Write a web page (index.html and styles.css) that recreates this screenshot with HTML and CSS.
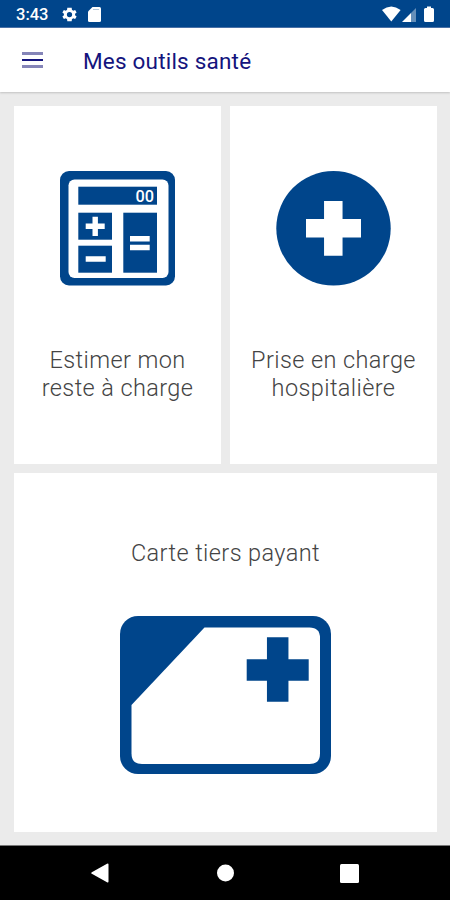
FILE: index.html
```html
<!DOCTYPE html>
<html lang="fr">
<head>
    <meta charset="UTF-8">
    <meta name="viewport" content="width=device-width, initial-scale=1.0">
    <title>Mes outils santé</title>
    <link rel="stylesheet" href="styles.css">
</head>
<body>
    <div class="status-bar">
        <span class="time">3:43</span>
        <svg class="gear" width="15" height="15" viewBox="2 2 20 20">
            <path fill="#fff" fill-rule="evenodd" d="M19.4 13a7.500 7.500 0 0 0 0-2l2.100-1.600-2-3.500-2.500 1a7.700 7.700 0 0 0-1.700-1L14.900 3H9.100l-.4 2.900a7.700 7.700 0 0 0-1.700 1l-2.500-1-2 3.500L4.600 11a7.500 7.500 0 0 0 0 2l-2.100 1.600 2 3.500 2.500-1c.5.4 1.100.7 1.700 1l.4 2.900h5.800l.4-2.900c.6-.3 1.200-.6 1.700-1l2.500 1 2-3.500zM12 15.500a3.500 3.500 0 1 1 0-7 3.500 3.500 0 0 1 0 7z"/>
        </svg>
        <svg class="sd" width="13" height="15" viewBox="0 0 13 15">
            <path fill="#fff" d="M4.500 0h7Q13 0 13 1.500v12q0 1.500-1.500 1.500h-10Q0 15 0 13.500v-9z"/>
            <path stroke="#00458b" stroke-opacity=".3" stroke-width="1" d="M5 2.500h6"/>
        </svg>
        <svg class="signals" width="54" height="17" viewBox="0 0 54 17">
            <path fill="#fff" d="M0 4Q9.300-3.200 18.600 4L9.300 15.500z"/>
            <path fill="#fff" d="M20 16L29 7v9z"/>
            <path fill="#fff" fill-opacity=".4" d="M29 7l5-5v14h-5z"/>
            <path fill="#fff" d="M45 .5h4V2h1.500q1.500 0 1.500 1.500v11q0 1.500-1.500 1.500h-7q-1.500 0-1.500-1.500v-11q0-1.500 1.500-1.500H45z"/>
        </svg>
    </div>

    <header>
        <button class="menu" aria-label="Menu">
            <span></span>
            <span></span>
            <span></span>
        </button>
        <h1>Mes outils santé</h1>
    </header>

    <main>
        <a class="card" href="#">
            <svg width="115" height="115" viewBox="0 0 115 115">
                <rect fill="#00458b" width="115" height="114.500" rx="9"/>
                <rect fill="#fff" x="8.500" y="8.500" width="100" height="98.500" rx="6"/>
                <g fill="#00458b">
                    <rect x="18.300" y="15.700" width="78.700" height="18"/>
                    <rect x="18.300" y="41.700" width="33.700" height="27"/>
                    <rect x="18.300" y="74.700" width="33.700" height="27"/>
                    <rect x="63.300" y="41.700" width="33.700" height="60"/>
                </g>
                <path stroke="#fff" stroke-width="5.400" d="M25.700 55.300h19M35.200 45.700v19.300M25.700 88h20M70 67.800h19.700M70 76.500h19.700"/>
                <text class="digits" x="75.500" y="31" textLength="18.500" lengthAdjust="spacingAndGlyphs">00</text>
            </svg>
            <span>Estimer mon<br>reste à charge</span>
        </a>
        <a class="card" href="#">
            <svg width="115" height="115" viewBox="0 0 115 115">
                <circle fill="#00458b" cx="57.500" cy="57.300" r="57.200"/>
                <path stroke="#fff" stroke-width="18.500" d="M30 57.300h55M57.300 30v54.700"/>
            </svg>
            <span>Prise en charge<br>hospitalière</span>
        </a>
        <a class="card card-wide" href="#">
            <span>Carte tiers payant</span>
            <svg width="211" height="158" viewBox="0 0 211 158">
                <rect fill="#00458b" width="211" height="158" rx="18"/>
                <path fill="#fff" d="M84.500 11.500H189.500Q200 11.500 200 22V137.500Q200 148 189.500 148H22Q11.500 148 11.500 137.500V89z"/>
                <path stroke="#00458b" stroke-width="21.500" d="M126.700 54h62M157.700 21.200v64.500"/>
            </svg>
        </a>
    </main>

    <nav>
        <svg width="18" height="20" viewBox="0 0 18 20">
            <path fill="#fff" d="M.8 9.200L16 .8Q17.500 0 17.500 1.600v16.800Q17.500 20 16 19.200L.8 10.800Q-.4 10 .8 9.200z"/>
        </svg>
        <svg width="18" height="18" viewBox="0 0 18 18">
            <circle fill="#fff" cx="9.500" cy="9" r="8.500"/>
        </svg>
        <svg width="19" height="19" viewBox="0 0 19 19">
            <rect fill="#fff" width="19" height="19" rx="1.500"/>
        </svg>
    </nav>
</body>
</html>
```
FILE: styles.css
```css
* {
    box-sizing: border-box;
}
body {
    font-family: Roboto, sans-serif;
    margin: 0;
    height: 900px;
    display: flex;
    flex-direction: column;
    background-color: #ebebeb;
    color: #555;
    overflow: hidden;
}
.status-bar {
    height: 28px;
    flex: none;
    display: flex;
    align-items: center;
    padding: 0 14px 0 16px;
    background-color: #00458b;
    border-bottom: 1px solid #4a72a8;
    color: #fff;
}
.time {
    width: 46px;
    font-size: 16.500px;
    font-weight: 500;
    line-height: 28px;
    padding-top: 2px;
}
.gear {
    margin-top: 1px;
}
.sd {
    margin: 2px 0 0 11px;
}
.signals {
    margin-left: auto;
    margin-top: 1px;
}
header {
    height: 64px;
    flex: none;
    display: flex;
    align-items: center;
    padding-left: 22px;
    background-color: #fff;
    box-shadow: 0 1px 2px rgba(0, 0, 0, 0.18);
}
.menu {
    display: flex;
    flex-direction: column;
    gap: 4px;
    width: 21px;
    margin: 0 40px 0 0;
    padding: 0;
    border: none;
    background: none;
}
.menu span {
    height: 2px;
    background-color: #14147d;
}
.menu span:first-child,
.menu span:last-child {
    height: 3px;
    background-color: #8585b8;
}
h1 {
    margin: 1px 0 0;
    font-size: 22.500px;
    font-weight: 400;
    letter-spacing: 0.2px;
    color: #14147d;
}
main {
    flex: 1;
    display: grid;
    grid-template-columns: 1fr 1fr;
    grid-template-rows: 358px 359px;
    gap: 9px;
    padding: 14px 13px 13px 14px;
}
.card {
    display: flex;
    flex-direction: column;
    align-items: center;
    gap: 60px;
    padding-top: 65px;
    background-color: #fff;
    color: #444;
    font-size: 23.500px;
    font-weight: 300;
    line-height: 28px;
    letter-spacing: 0.4px;
    text-align: center;
    text-decoration: none;
}
.card-wide {
    grid-column: 1 / 3;
    gap: 49px;
    padding-top: 66px;
}
.digits {
    font-size: 16px;
    font-weight: 500;
    letter-spacing: 0;
    fill: #fff;
}
nav {
    height: 55px;
    flex: none;
    display: flex;
    align-items: center;
    justify-content: space-between;
    padding: 0 91px;
    background-color: #000;
    border-top: 1px solid #777;
}
```
